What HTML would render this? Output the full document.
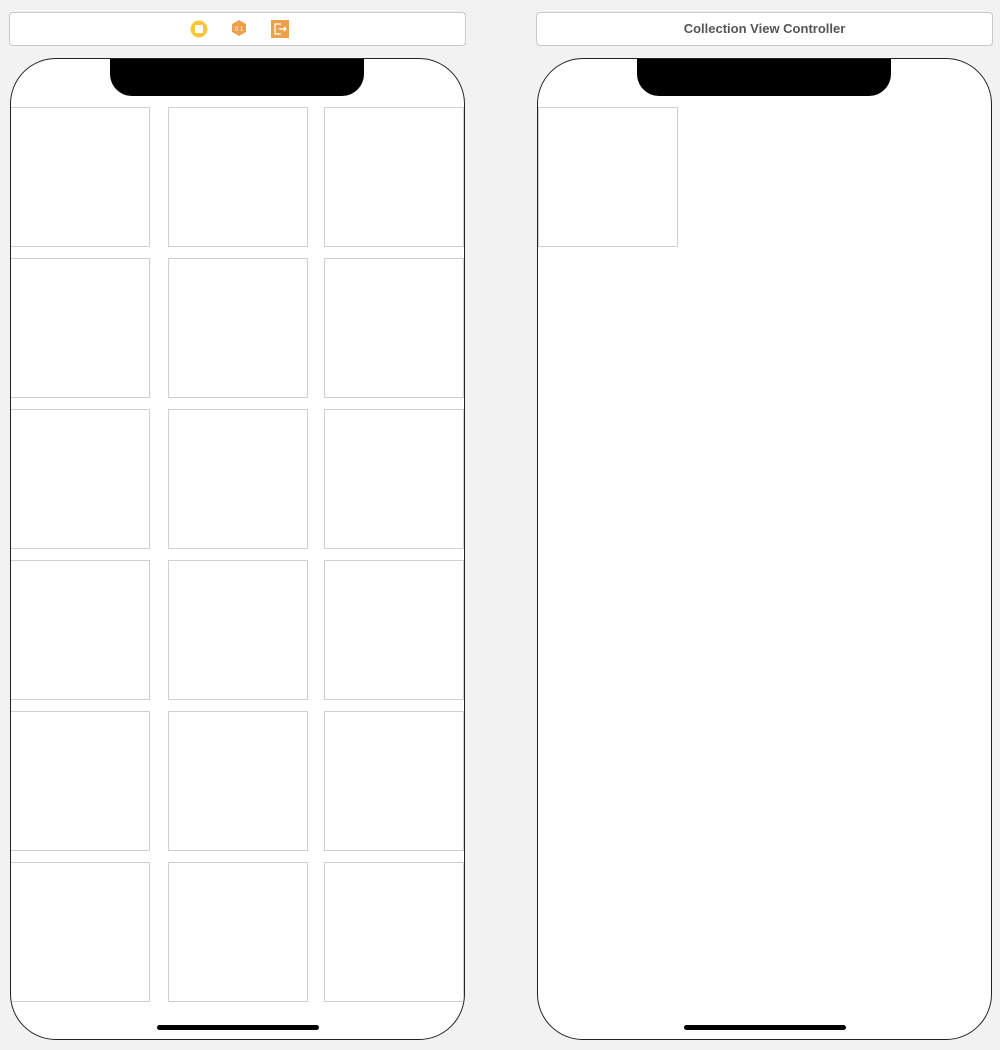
<!DOCTYPE html>
<html><head><style>
body{margin:0;width:1000px;height:1050px;background:#f2f2f2;position:relative;overflow:hidden;font-family:"Liberation Sans",sans-serif}
.bar{position:absolute;top:12px;height:32px;background:#fff;border:1px solid #c9c9c9;border-radius:4px}
.phone{position:absolute;top:58px;width:453px;height:980px;background:#fff;border:1.5px solid #222;border-radius:46px;overflow:hidden}
.notch{position:absolute;top:-2px;left:99px;width:254px;height:39px;background:#000;border-radius:0 0 22px 22px}
.home{position:absolute;left:146px;top:966px;width:162px;height:5px;background:#000;border-radius:3px}
.c{position:absolute;width:140px;height:140px;border:1px solid #cfcfcf;box-sizing:border-box}
</style></head><body>
<div class="bar" style="left:9px;width:455px">
  <svg style="position:absolute;left:180px;top:6px" width="20" height="20"><circle cx="9" cy="10" r="8.5" fill="#f9c63a"/><rect x="5" y="6" width="8" height="8" rx="1" fill="#fff"/></svg>
  <svg style="position:absolute;left:220px;top:5px" width="20" height="20"><polygon points="9,2 16,6 16,14 9,18 2,14 2,6" fill="#eda04a"/><text x="5" y="13" font-size="6" fill="#fff">0 1</text></svg>
  <svg style="position:absolute;left:260px;top:5px" width="20" height="20"><rect x="1" y="2" width="18" height="18" fill="#eda04a"/><path d="M11 6H5v10h6M9 11h7M14 9l2 2-2 2" stroke="#fff" stroke-width="1.3" fill="none"/></svg>
</div>
<div class="bar" style="left:536px;width:455px;text-align:center;line-height:32px;font-size:13px;font-weight:bold;color:#555">Collection View Controller</div>

<div class="phone" style="left:10px">
  <div class="c" style="left:-1px;top:48px"></div><div class="c" style="left:156.5px;top:48px"></div><div class="c" style="left:312.5px;top:48px"></div>
  <div class="c" style="left:-1px;top:199px"></div><div class="c" style="left:156.5px;top:199px"></div><div class="c" style="left:312.5px;top:199px"></div>
  <div class="c" style="left:-1px;top:350px"></div><div class="c" style="left:156.5px;top:350px"></div><div class="c" style="left:312.5px;top:350px"></div>
  <div class="c" style="left:-1px;top:501px"></div><div class="c" style="left:156.5px;top:501px"></div><div class="c" style="left:312.5px;top:501px"></div>
  <div class="c" style="left:-1px;top:652px"></div><div class="c" style="left:156.5px;top:652px"></div><div class="c" style="left:312.5px;top:652px"></div>
  <div class="c" style="left:-1px;top:803px"></div><div class="c" style="left:156.5px;top:803px"></div><div class="c" style="left:312.5px;top:803px"></div>
  <div class="notch"></div>
  <div class="home"></div>
</div>

<div class="phone" style="left:537px">
  <div class="c" style="left:0px;top:48px"></div>
  <div class="notch"></div>
  <div class="home"></div>
</div>
</body></html>
